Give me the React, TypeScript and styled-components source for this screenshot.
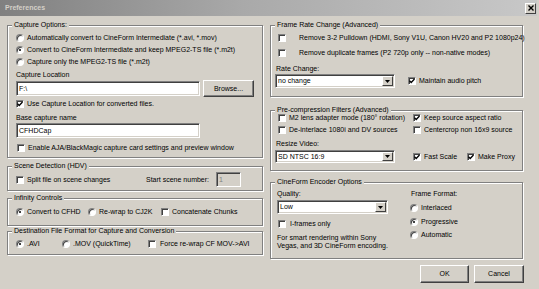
import React from 'react';
import styled, { createGlobalStyle } from 'styled-components';

const face = '#d4d0c8';

const GlobalStyle = createGlobalStyle`
  html, body {
    margin: 0;
    padding: 0;
    background: ${face};
  }
  body {
    font-family: "Liberation Sans", Arial, sans-serif;
    font-size: 7px;
    line-height: 8px;
    color: #000;
  }
  * {
    box-sizing: border-box;
  }
`;

const Window = styled.div`
  width: 539px;
  height: 289px;
  background: ${face};
  display: flex;
  flex-direction: column;
  overflow: hidden;
`;

const TitleBar = styled.div`
  height: 16px;
  margin-right: 2px;
  padding: 0 1px 0 5px;
  display: flex;
  align-items: center;
  justify-content: space-between;
  background: linear-gradient(90deg, #808080 0%, #a9a9a9 45%, #c8c8c8 100%);
`;

const Title = styled.span`
  color: ${face};
  font-weight: bold;
`;

const CloseBox = styled.span`
  width: 11px;
  height: 11px;
  background: ${face};
  border: 1px solid;
  border-color: #fff #404040 #404040 #fff;
  display: flex;
  align-items: center;
  justify-content: center;
`;

const Body = styled.div`
  display: grid;
  grid-template-columns: 256px 253px;
  column-gap: 7px;
  padding-left: 7px;
  align-items: start;
`;

const Column = styled.div`
  display: flex;
  flex-direction: column;
`;

const Group = styled.div<{ $mt: number; $h: number; $pt: number; $pl: number }>`
  position: relative;
  margin-top: ${p => p.$mt}px;
  height: ${p => p.$h}px;
  padding: ${p => p.$pt}px 0 0 ${p => p.$pl}px;
  border: 1px solid #808080;
  box-shadow: inset 1px 1px 0 #fff, 1px 1px 0 #fff;
  display: flex;
  flex-direction: column;
`;

// caption sits over the etched top line
const Legend = styled.span`
  position: absolute;
  top: -4px;
  left: 4px;
  padding: 0 2px;
  background: ${face};
  line-height: 6px;
  white-space: nowrap;
`;

const Row = styled.div<{ $h: number; $mt?: number; $ml?: number }>`
  display: flex;
  align-items: center;
  height: ${p => p.$h}px;
  margin-top: ${p => p.$mt ?? 0}px;
  margin-left: ${p => p.$ml ?? 0}px;
  white-space: nowrap;
`;

const Label = styled.div<{ $mt?: number; $ml?: number }>`
  height: 8px;
  margin-top: ${p => p.$mt ?? 0}px;
  margin-left: ${p => p.$ml ?? 0}px;
  white-space: nowrap;
`;

const Opt = styled.div<{ $w?: number; $gap?: number; $ml?: number }>`
  display: flex;
  align-items: center;
  flex: none;
  gap: ${p => p.$gap ?? 3}px;
  width: ${p => (p.$w ? `${p.$w}px` : 'auto')};
  margin-left: ${p => p.$ml ?? 0}px;
`;

const Box = styled.span`
  width: 8px;
  height: 8px;
  flex: none;
  background: #fff;
  border: 1px solid;
  border-color: #808080 #fff #fff #808080;
  box-shadow: inset 1px 1px 0 #404040;
  display: flex;
  align-items: center;
  justify-content: center;
`;

const Round = styled.span<{ $on?: boolean }>`
  width: 8px;
  height: 8px;
  flex: none;
  border-radius: 50%;
  background: #fff;
  border: 1px solid;
  border-color: #808080 #fff #fff #808080;
  box-shadow: inset 1px 1px 0 #404040;
  display: flex;
  align-items: center;
  justify-content: center;

  &::after {
    content: '';
    width: 2px;
    height: 2px;
    border-radius: 50%;
    background: ${p => (p.$on ? '#000' : 'transparent')};
  }
`;

const Field = styled.div<{ $w: number; $h: number; $off?: boolean }>`
  width: ${p => p.$w}px;
  height: ${p => p.$h}px;
  flex: none;
  background: ${p => (p.$off ? face : '#fff')};
  color: ${p => (p.$off ? '#808080' : '#000')};
  border: 1px solid;
  border-color: #808080 #fff #fff #808080;
  box-shadow: inset 1px 1px 0 #404040, inset -1px -1px 0 ${face};
  display: flex;
  align-items: center;
  padding-left: 2px;
  white-space: nowrap;
`;

const DropBtn = styled.span`
  margin-left: auto;
  margin-right: 1px;
  width: 11px;
  height: calc(100% - 2px);
  background: ${face};
  border: 1px solid;
  border-color: #fff #404040 #404040 #fff;
  display: flex;
  align-items: center;
  justify-content: center;
`;

const Btn = styled.div<{ $w: number; $h: number }>`
  width: ${p => p.$w}px;
  height: ${p => p.$h}px;
  flex: none;
  background: ${face};
  border: 1px solid;
  border-color: #fff #404040 #404040 #fff;
  box-shadow: inset -1px -1px 0 #808080;
  display: flex;
  align-items: center;
  justify-content: center;
`;

const Split = styled.div`
  display: flex;
`;

const Sub = styled.div<{ $w?: number }>`
  display: flex;
  flex-direction: column;
  width: ${p => (p.$w ? `${p.$w}px` : 'auto')};
  flex: none;
`;

const Note = styled.div`
  margin-top: 5px;
  line-height: 8px;
  white-space: nowrap;
`;

const Span = styled.span<{ $w: number }>`
  width: ${p => p.$w}px;
  flex: none;
`;

const Buttons = styled.div`
  display: flex;
  justify-content: flex-end;
  gap: 5px;
  margin: 6px -1px 0 0;
`;

const CheckBox = ({ on }: { on?: boolean }) => (
  <Box>
    {on && (
      <svg width="6" height="6" viewBox="0 0 6 6">
        <polyline points="0.5,2.8 2.2,4.5 5.5,1" fill="none" stroke="#000" strokeWidth="1.3" />
      </svg>
    )}
  </Box>
);

const Check = ({ on, gap, w, ml, children }: { on?: boolean; gap?: number; w?: number; ml?: number; children: React.ReactNode }) => (
  <Opt $gap={gap} $w={w} $ml={ml}>
    <CheckBox on={on} />
    <span>{children}</span>
  </Opt>
);

const Radio = ({ on, w, children }: { on?: boolean; w?: number; children: React.ReactNode }) => (
  <Opt $w={w}>
    <Round $on={on} />
    <span>{children}</span>
  </Opt>
);

const Select = ({ w, h, value }: { w: number; h: number; value: string }) => (
  <Field $w={w} $h={h}>
    <span>{value}</span>
    <DropBtn>
      <svg width="5" height="3" viewBox="0 0 5 3">
        <polygon points="0,0 5,0 2.5,3" fill="#000" />
      </svg>
    </DropBtn>
  </Field>
);

export default function App() {
  return (
    <Window>
      <GlobalStyle />
      <TitleBar>
        <Title>Preferences</Title>
        <CloseBox>
          <svg width="6" height="6" viewBox="0 0 6 6">
            <path d="M0.5 0.5 L5.5 5.5 M5.5 0.5 L0.5 5.5" stroke="#000" strokeWidth="1.4" />
          </svg>
        </CloseBox>
      </TitleBar>
      <Body>
        <Column>
          <Group $mt={9} $h={133} $pt={6} $pl={8}>
            <Legend>Capture Options:</Legend>
            <Row $h={12}>
              <Radio>Automatically convert to CineForm Intermediate (*.avi, *.mov)</Radio>
            </Row>
            <Row $h={12}>
              <Radio on>Convert to CineForm Intermediate and keep MPEG2-TS file (*.m2t)</Radio>
            </Row>
            <Row $h={11}>
              <Radio>Capture only the MPEG2-TS file (*.m2t)</Radio>
            </Row>
            <Label $mt={4}>Capture Location</Label>
            <Row $h={17} $mt={1}>
              <Field $w={184} $h={15}>F:\</Field>
              <Opt $ml={3}>
                <Btn $w={51} $h={17}>Browse...</Btn>
              </Opt>
            </Row>
            <Row $h={10} $mt={2}>
              <Check on>Use Capture Location for converted files.</Check>
            </Row>
            <Label $mt={5}>Base capture name</Label>
            <Row $h={15} $mt={1}>
              <Field $w={184} $h={15}>CFHDCap</Field>
            </Row>
            <Row $h={10} $mt={5} $ml={1}>
              <Check>Enable AJA/BlackMagic capture card settings and preview window</Check>
            </Row>
          </Group>

          <Group $mt={8} $h={25} $pt={5} $pl={8}>
            <Legend>Scene Detection (HDV)</Legend>
            <Row $h={15}>
              <Check w={130}>Split file on scene changes</Check>
              <Span $w={70}>Start scene number:</Span>
              <Field $w={25} $h={15} $off>1</Field>
            </Row>
          </Group>

          <Group $mt={7} $h={28} $pt={7} $pl={8}>
            <Legend>Infinity Controls</Legend>
            <Row $h={12}>
              <Radio on w={72}>Convert to CFHD</Radio>
              <Radio w={73}>Re-wrap to CJ2K</Radio>
              <Check>Concatenate Chunks</Check>
            </Row>
          </Group>

          <Group $mt={5} $h={24} $pt={6} $pl={8}>
            <Legend>Destination File Format for Capture and Conversion</Legend>
            <Row $h={12}>
              <Radio on w={46}>.AVI</Radio>
              <Radio w={86}>.MOV (QuickTime)</Radio>
              <Check gap={4}>Force re-wrap CF MOV-&gt;AVI</Check>
            </Row>
          </Group>
        </Column>

        <Column>
          <Group $mt={9} $h={72} $pt={6} $pl={4}>
            <Legend>Frame Rate Change (Advanced)</Legend>
            <Row $h={12} $ml={3}>
              <Check gap={13}>Remove 3-2 Pulldown (HDMI, Sony V1U, Canon HV20 and P2 1080p24)</Check>
            </Row>
            <Row $h={12} $mt={3} $ml={3}>
              <Check gap={13}>Remove duplicate frames (P2 720p only -- non-native modes)</Check>
            </Row>
            <Label $mt={6} $ml={1}>Rate Change:</Label>
            <Row $h={14} $mt={1}>
              <Select w={120} h={14} value="no change" />
              <Check on ml={13}>Maintain audio pitch</Check>
            </Row>
          </Group>

          <Group $mt={13} $h={61} $pt={2} $pl={4}>
            <Legend>Pre-compression Filters (Advanced)</Legend>
            <Row $h={10} $ml={3}>
              <Check w={135}>M2 lens adapter mode (180° rotation)</Check>
              <Check on>Keep source aspect ratio</Check>
            </Row>
            <Row $h={10} $mt={2} $ml={3}>
              <Check w={135}>De-interlace 1080i and DV sources</Check>
              <Check>Centercrop non 16x9 source</Check>
            </Row>
            <Label $mt={5} $ml={1}>Resize Video:</Label>
            <Row $h={13} $mt={2}>
              <Select w={120} h={13} value="SD NTSC 16:9" />
              <Check on ml={18} w={54}>Fast Scale</Check>
              <Check on>Make Proxy</Check>
            </Row>
          </Group>

          <Group $mt={11} $h={77} $pt={7} $pl={6}>
            <Legend>CineForm Encoder Options</Legend>
            <Split>
              <Sub $w={133}>
                <Label>Quality:</Label>
                <Row $h={14} $mt={2}>
                  <Select w={111} h={14} value="Low" />
                </Row>
                <Row $h={10} $mt={5} $ml={1}>
                  <Check gap={4}>I-frames only</Check>
                </Row>
                <Note>
                  For smart rendering within Sony
                  <br />
                  Vegas, and 3D CineForm encoding.
                </Note>
              </Sub>
              <Sub>
                <Label $ml={1}>Frame Format:</Label>
                <Row $h={10} $mt={5}>
                  <Radio>Interlaced</Radio>
                </Row>
                <Row $h={10} $mt={4}>
                  <Radio on>Progressive</Radio>
                </Row>
                <Row $h={10} $mt={3}>
                  <Radio>Automatic</Radio>
                </Row>
              </Sub>
            </Split>
          </Group>

          <Buttons>
            <Btn $w={49} $h={18}>OK</Btn>
            <Btn $w={50} $h={18}>Cancel</Btn>
          </Buttons>
        </Column>
      </Body>
    </Window>
  );
}
